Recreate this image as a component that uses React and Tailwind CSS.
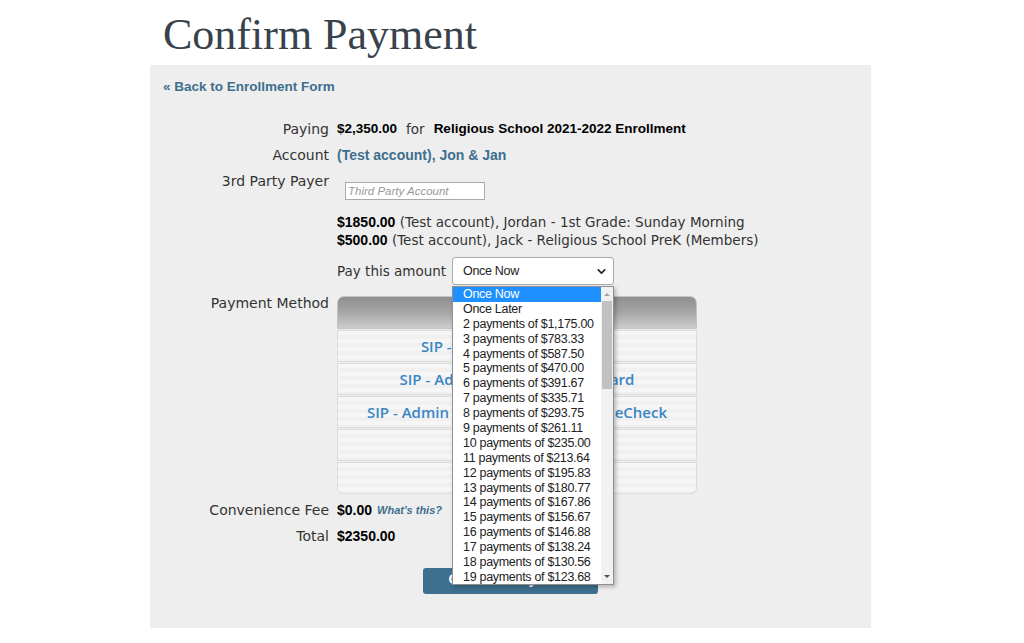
import React from "react";
import { ChevronDown } from "lucide-react";

const body = { fontFamily: '"DejaVu Sans", sans-serif' };
const bold = { fontFamily: '"Liberation Sans", Arial, sans-serif' };

const options = [
  "Once Now",
  "Once Later",
  "2 payments of $1,175.00",
  "3 payments of $783.33",
  "4 payments of $587.50",
  "5 payments of $470.00",
  "6 payments of $391.67",
  "7 payments of $335.71",
  "8 payments of $293.75",
  "9 payments of $261.11",
  "10 payments of $235.00",
  "11 payments of $213.64",
  "12 payments of $195.83",
  "13 payments of $180.77",
  "14 payments of $167.86",
  "15 payments of $156.67",
  "16 payments of $146.88",
  "17 payments of $138.24",
  "18 payments of $130.56",
  "19 payments of $123.68",
  "20 payments of $117.50",
];

const methods = [
  "SIP - Credit Card Payments",
  "SIP - Admin Keyed-In Credit Card",
  "SIP - Admin Manual Bank Account eCheck",
  "Check",
  "Cash",
];

function Row({ label, children, className = "" }) {
  return (
    <div className={`flex items-center h-[26px] ${className}`}>
      <div className="w-[179px] shrink-0 text-right text-[14px] text-[#333]" style={body}>
        {label}
      </div>
      <div className="ml-2 flex items-center text-[13.5px]">{children}</div>
    </div>
  );
}

function PaymentDropdown() {
  return (
    <div className="absolute left-0 top-[29px] z-10 w-[162px] h-[299px] bg-white border border-[#8f8f8f] shadow-[2px_2px_4px_rgba(0,0,0,0.25)] flex overflow-hidden">
      <ul className="flex-1 text-[12.5px] tracking-[-0.3px] text-[#222]" style={bold}>
        {options.map((opt, i) => (
          <li
            key={opt}
            className={`h-[14.9px] leading-[14.9px] pl-[10px] whitespace-nowrap ${
              i === 0 ? "bg-[#1e90ff] text-white" : ""
            }`}
          >
            {opt}
          </li>
        ))}
      </ul>
      <div className="w-[12px] bg-[#f1f1f1] flex flex-col items-center">
        <div className="h-[14px] flex items-center justify-center">
          <div className="w-0 h-0 border-l-[3px] border-r-[3px] border-b-[3px] border-l-transparent border-r-transparent border-b-[#a3a3a3]" />
        </div>
        <div className="w-[10px] h-[88px] bg-[#c1c1c1]" />
        <div className="flex-1" />
        <div className="h-[16px] flex items-center justify-center">
          <div className="w-0 h-0 border-l-[3px] border-r-[3px] border-t-[3px] border-l-transparent border-r-transparent border-t-[#505050]" />
        </div>
      </div>
    </div>
  );
}

export default function App() {
  return (
    <div className="min-h-screen bg-white">
      <div className="ml-[150px] w-[721px]">
        <h1
          className="h-[65px] pt-[13px] pl-[13px] text-[44px] leading-[44px] text-[#38424b]"
          style={{ fontFamily: '"Liberation Serif", "DejaVu Serif", serif' }}
        >
          Confirm Payment
        </h1>

        <div className="bg-[#eeeeee] pt-[12px] pb-[34px]">
          <a
            href="#"
            className="block pl-[13px] h-[20px] leading-[20px] text-[13.5px] font-bold text-[#3e6e8e]"
            style={bold}
          >
            « Back to Enrollment Form
          </a>

          <Row label="Paying" className="mt-[19px]">
            <span className="font-bold text-black" style={bold}>$2,350.00</span>
            <span className="mx-[9px] text-[#333]" style={body}>for</span>
            <span className="font-bold text-black" style={bold}>
              Religious School 2021-2022 Enrollment
            </span>
          </Row>

          <Row label="Account">
            <span className="font-bold text-[14px] text-[#3e6e8e]" style={bold}>
              (Test account), Jon &amp; Jan
            </span>
          </Row>

          <div className="flex items-start">
            <div
              className="w-[179px] shrink-0 text-right text-[14px] leading-[26px] text-[#333]"
              style={body}
            >
              3rd Party Payer
            </div>
            <input
              placeholder="Third Party Account"
              className="ml-4 mt-[14px] w-[140px] h-[18px] bg-white border border-[#a9a9a9] px-[2px] text-[11.5px] italic placeholder:text-[#9a9a9a]"
              style={bold}
            />
          </div>

          <div className="ml-[187px] mt-[13px] text-[13.5px] leading-[18px] text-[#333]" style={body}>
            <div>
              <span className="font-bold text-[14px] text-black" style={bold}>$1850.00</span> (Test account), Jordan - 1st Grade: Sunday Morning
            </div>
            <div>
              <span className="font-bold text-[14px] text-black" style={bold}>$500.00</span> (Test account), Jack - Religious School PreK (Members)
            </div>
          </div>

          <div className="ml-[187px] mt-[8px] flex items-center h-[28px]">
            <span className="w-[115px] shrink-0 text-[13.5px] text-[#333]" style={body}>
              Pay this amount
            </span>
            <div className="relative">
              <div
                className="w-[162px] h-[28px] bg-white border border-[#aaaaaa] rounded-[3px] flex items-center justify-between pl-[10px] pr-[5px] text-[12.5px] tracking-[-0.3px] text-[#222]"
                style={bold}
              >
                <span>Once Now</span>
                <ChevronDown className="w-[13px] h-[13px] text-[#222]" strokeWidth={3} />
              </div>
              <PaymentDropdown />
            </div>
          </div>

          <div className="mt-[11px] flex items-start">
            <div
              className="w-[179px] shrink-0 text-right text-[14px] leading-[14px] text-[#333]"
              style={body}
            >
              Payment Method
            </div>
            <div className="ml-2 w-[360px]">
              <div className="h-[33px] rounded-t-[7px] bg-gradient-to-b from-[#8f8f8f] via-[#a6a6a6] to-[#cdcdcd] border border-[#c4c4c4]" />
              {methods.map((m, i) => (
                <div
                  key={m}
                  className={`mt-[1px] h-[32px] flex items-center justify-center whitespace-nowrap border border-[#dcdcdc] bg-[repeating-linear-gradient(180deg,#f6f6f6_0px,#f6f6f6_4px,#f0f0f0_4px,#f0f0f0_8px)] text-[15px] font-semibold text-[#3a86c4] ${
                    i === methods.length - 1 ? "rounded-b-[6px]" : ""
                  }`}
                  style={{ fontFamily: '"Open Sans", sans-serif' }}
                >
                  {m}
                </div>
              ))}
            </div>
          </div>

          <Row label="Convenience Fee" className="mt-[3px]">
            <span className="font-bold text-[14px] text-black" style={bold}>$0.00</span>
            <span className="ml-[5px] text-[11px] font-bold italic text-[#3e6e8e]" style={bold}>
              What's this?
            </span>
          </Row>

          <Row label="Total">
            <span className="font-bold text-[14px] text-black" style={bold}>$2350.00</span>
          </Row>

          <div className="mt-[19px] flex justify-center">
            <button
              className="w-[175px] h-[26px] pb-[4px] rounded-[3px] bg-[#3d6f8e] text-white text-[15px] leading-[18px] font-bold"
              style={bold}
            >
              Confirm Payment
            </button>
          </div>
        </div>
      </div>
    </div>
  );
}
